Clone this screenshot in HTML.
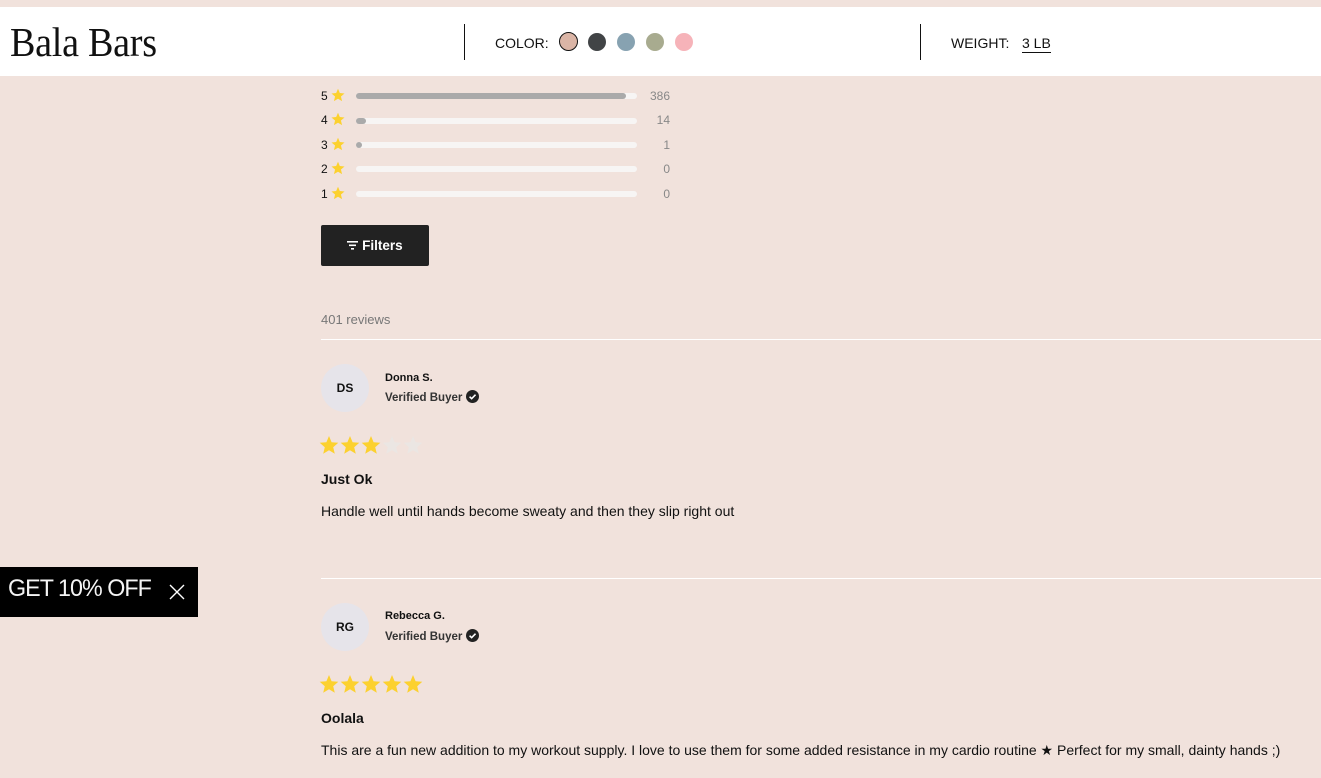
<!DOCTYPE html>
<html><head><meta charset="utf-8"><style>
*{margin:0;padding:0;box-sizing:border-box}
body{width:1321px;height:778px;overflow:hidden;background:#f1e2dc;font-family:"Liberation Sans",Arial,sans-serif;position:relative;color:#111}
.a{position:absolute}
.hdr{left:0;top:7px;width:1321px;height:69px;background:#fff}
.logo{left:10px;top:18px;font-family:"Liberation Serif",serif;font-size:41px;letter-spacing:-0.3px;color:#111;transform:scaleX(0.93);transform-origin:left}
.vl{width:1px;height:36px;background:#111;top:24px}
.lbl{font-size:14px;top:35px;color:#111}
.dot{width:18px;height:18px;border-radius:50%;top:33px}
.row{left:321px;font-size:12px}
.bar{left:356px;width:281px;height:6px;border-radius:3px;background:#f7f5f4}
.fill{height:6px;border-radius:3px;background:#aaa}
.cnt{font-size:12px;color:#888;text-align:right;width:40px;left:630px}
.hr{left:321px;width:1000px;height:1px;background:#fff}
.av{width:48px;height:48px;border-radius:50%;background:#e6e4ea;font-size:12px;font-weight:bold;text-align:center;line-height:48px;left:321px}
.nm{left:385px;font-size:11px;font-weight:bold}
.vb{left:385px;font-size:11.5px;font-weight:bold;color:#333}
.tt{left:321px;font-size:14px;font-weight:bold}
.bd{left:321px;font-size:14px;color:#111}
</style></head><body>
<div class="a hdr"></div>
<div class="a logo">Bala Bars</div>
<div class="a vl" style="left:464px"></div>
<div class="a vl" style="left:920px"></div>
<div class="a lbl" style="left:495px">COLOR:</div>
<div class="a dot" style="left:559px;background:#dbb5a6;border:1.5px solid #111;width:19px;height:19px;top:32px"></div>
<div class="a dot" style="left:588px;background:#414446"></div>
<div class="a dot" style="left:617px;background:#87a2b1"></div>
<div class="a dot" style="left:646px;background:#a8ab8f"></div>
<div class="a dot" style="left:675px;background:#f6b3b9"></div>
<div class="a lbl" style="left:951px">WEIGHT:</div>
<div class="a lbl" style="left:1022px;border-bottom:1px solid #111;padding-bottom:1px">3 LB</div>

<svg width="0" height="0" style="position:absolute"><defs><polygon id="st" points="10,1 12.6,7.2 19.3,7.8 14.2,12.2 15.8,18.8 10,15.3 4.2,18.8 5.8,12.2 0.7,7.8 7.4,7.2"/></defs></svg>

<div class="a row" style="top:89px">5</div><svg class="a" style="left:331px;top:88px" width="14" height="14" viewBox="0 0 20 20"><use href="#st" fill="#fcd12f"/></svg>
<div class="a bar" style="top:93px"><div class="fill" style="width:270px"></div></div><div class="a cnt" style="top:89px">386</div>
<div class="a row" style="top:113px">4</div><svg class="a" style="left:331px;top:112px" width="14" height="14" viewBox="0 0 20 20"><use href="#st" fill="#fcd12f"/></svg>
<div class="a bar" style="top:118px"><div class="fill" style="width:10px"></div></div><div class="a cnt" style="top:113px">14</div>
<div class="a row" style="top:138px">3</div><svg class="a" style="left:331px;top:137px" width="14" height="14" viewBox="0 0 20 20"><use href="#st" fill="#fcd12f"/></svg>
<div class="a bar" style="top:142px"><div class="fill" style="width:6px"></div></div><div class="a cnt" style="top:138px">1</div>
<div class="a row" style="top:162px">2</div><svg class="a" style="left:331px;top:161px" width="14" height="14" viewBox="0 0 20 20"><use href="#st" fill="#fcd12f"/></svg>
<div class="a bar" style="top:166px"></div><div class="a cnt" style="top:162px">0</div>
<div class="a row" style="top:187px">1</div><svg class="a" style="left:331px;top:186px" width="14" height="14" viewBox="0 0 20 20"><use href="#st" fill="#fcd12f"/></svg>
<div class="a bar" style="top:191px"></div><div class="a cnt" style="top:187px">0</div>

<div class="a" style="left:321px;top:225px;width:108px;height:41px;background:#222;border-radius:2px;color:#fff;font-weight:bold;font-size:13.5px;line-height:41px;text-align:center">
<svg width="11" height="9" style="vertical-align:0" viewBox="0 0 11 9"><rect x="0" y="0" width="11" height="1.6" fill="#fff"/><rect x="2" y="3.5" width="7" height="1.6" fill="#fff"/><rect x="4" y="7" width="3" height="1.6" fill="#fff"/></svg> Filters</div>

<div class="a" style="left:321px;top:312px;font-size:13px;color:#777">401 reviews</div>
<div class="a hr" style="top:339px"></div>

<div class="a av" style="top:364px">DS</div>
<div class="a nm" style="top:372px">Donna S.</div>
<div class="a vb" style="top:390px">Verified Buyer <svg width="13" height="13" style="vertical-align:-2px" viewBox="0 0 12 12"><circle cx="6" cy="6" r="6" fill="#222"/><path d="M3.3 6.2 5.2 8 8.8 4.3" stroke="#fff" stroke-width="1.5" fill="none"/></svg></div>
<svg class="a" style="left:318px;top:434px" width="106" height="22" viewBox="0 0 106 22">
<use href="#st" fill="#fcd12f" transform="translate(1,1)"/><use href="#st" fill="#fcd12f" transform="translate(22,1)"/><use href="#st" fill="#fcd12f" transform="translate(43,1)"/><use href="#st" fill="#ebe6e3" transform="translate(64,1)"/><use href="#st" fill="#ebe6e3" transform="translate(85,1)"/></svg>
<div class="a tt" style="top:471px">Just Ok</div>
<div class="a bd" style="top:503px">Handle well until hands become sweaty and then they slip right out</div>
<div class="a hr" style="top:578px"></div>

<div class="a av" style="top:603px">RG</div>
<div class="a nm" style="top:610px">Rebecca G.</div>
<div class="a vb" style="top:629px">Verified Buyer <svg width="13" height="13" style="vertical-align:-2px" viewBox="0 0 12 12"><circle cx="6" cy="6" r="6" fill="#222"/><path d="M3.3 6.2 5.2 8 8.8 4.3" stroke="#fff" stroke-width="1.5" fill="none"/></svg></div>
<svg class="a" style="left:318px;top:673px" width="106" height="22" viewBox="0 0 106 22">
<use href="#st" fill="#fcd12f" transform="translate(1,1)"/><use href="#st" fill="#fcd12f" transform="translate(22,1)"/><use href="#st" fill="#fcd12f" transform="translate(43,1)"/><use href="#st" fill="#fcd12f" transform="translate(64,1)"/><use href="#st" fill="#fcd12f" transform="translate(85,1)"/></svg>
<div class="a tt" style="top:710px">Oolala</div>
<div class="a bd" style="top:742px">This are a fun new addition to my workout supply. I love to use them for some added resistance in my cardio routine ★ Perfect for my small, dainty hands ;)</div>

<div class="a" style="left:0;top:567px;width:198px;height:50px;background:#000"></div>
<div class="a" style="left:8px;top:575px;color:#f4f4f4;font-size:24px;line-height:28px;letter-spacing:-1px;transform:scaleX(0.97);transform-origin:left">GET 10% OFF</div>
<svg class="a" style="left:169px;top:584px" width="16" height="16" viewBox="0 0 16 16"><path d="M1 1 15 15M15 1 1 15" stroke="#fff" stroke-width="1.4"/></svg>
</body></html>
